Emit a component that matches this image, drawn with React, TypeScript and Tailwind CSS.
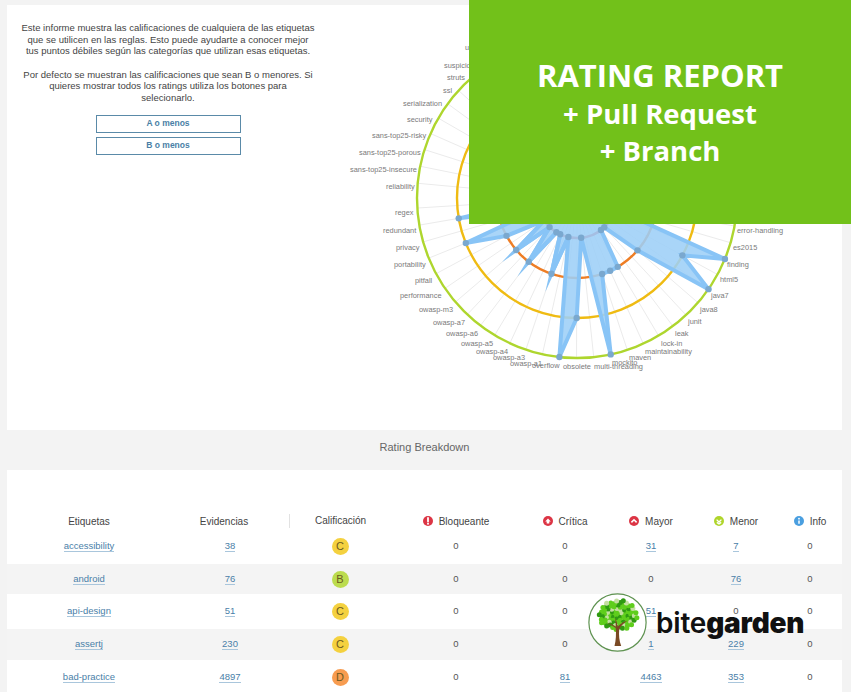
const CX = 577;
const CY = 198;

// radar: spoke k runs from the left horizontal, going down and round
const polar = (k: number, r: number) => {
  const a = ((3.6 + 6.16 * k) * Math.PI) / 180;
  return [CX - r * Math.cos(a), CY + r * Math.sin(a)];
};

const values: Record<number, number> = {
  1: 120, 3: 120, 4: 80, 6: 80, 8: 80, 11: 80, 13: 160, 14: 120, 16: 160,
  17: 80, 18: 80, 19: 80, 22: 80, 23: 160, 24: 120, 25: 160,
};
const points = Array.from({ length: 58 }, (_, k) => polar(k, values[k] ?? 40));

// the thin D-rated spikes keep their long pointed joins
const spikes = [6, 8, 11];

const labels: [string, number, number][] = [
  ['unused', 465, 47],
  ['suspicious', 444, 65],
  ['struts', 447, 77],
  ['ssl', 443, 90],
  ['serialization', 403, 103],
  ['security', 407, 119],
  ['sans-top25-risky', 372, 135],
  ['sans-top25-porous', 359, 152],
  ['sans-top25-insecure', 350, 169],
  ['reliability', 386, 186],
  ['regex', 395, 212],
  ['redundant', 383, 230],
  ['privacy', 396, 247],
  ['portability', 394, 264],
  ['pitfall', 415, 280],
  ['performance', 400, 295],
  ['owasp-m3', 419, 309],
  ['owasp-a7', 433, 322],
  ['owasp-a6', 446, 333],
  ['owasp-a5', 461, 343],
  ['owasp-a4', 476, 351],
  ['owasp-a3', 493, 357],
  ['owasp-a1', 510, 363],
  ['overflow', 532, 365],
  ['obsolete', 563, 366],
  ['multi-threading', 594, 366],
  ['mockito', 612, 362],
  ['maven', 629, 357],
  ['maintainability', 645, 351],
  ['lock-in', 661, 343],
  ['leak', 675, 333],
  ['junit', 688, 321],
  ['java8', 700, 309],
  ['java7', 711, 295],
  ['html5', 720, 279],
  ['finding', 727, 264],
  ['es2015', 733, 247],
  ['error-handling', 737, 230],
];

function RadarChart() {
  return (
    <svg width="513" height="425" viewBox="329 5 513 425" className="shrink-0">
      {points.map((_, k) => {
        const [x, y] = polar(k, 160);
        return <line key={k} x1={CX} y1={CY} x2={x} y2={y} stroke="#ebebeb" strokeWidth="1" />;
      })}
      <circle cx={CX} cy={CY} r="160" fill="none" stroke="#aed62e" strokeWidth="2.4" />
      <circle cx={CX} cy={CY} r="120" fill="none" stroke="#efbb12" strokeWidth="2.4" />
      <circle cx={CX} cy={CY} r="80" fill="none" stroke="#ee7d24" strokeWidth="2.4" />
      <circle cx={CX} cy={CY} r="40" fill="none" stroke="#d9404c" strokeWidth="2.4" />
      <polygon
        points={points.map((p) => p.join(',')).join(' ')}
        fill="#9dcff7"
        fillOpacity="0.88"
        stroke="#88c4f6"
        strokeWidth="4"
        strokeLinejoin="miter"
        strokeMiterlimit="4"
      />
      {spikes.map((k) => (
        <polyline
          key={k}
          points={[points[k - 1], points[k], points[k + 1]].map((p) => p.join(',')).join(' ')}
          fill="none"
          stroke="#88c4f6"
          strokeWidth="4"
          strokeLinejoin="miter"
          strokeMiterlimit="12"
        />
      ))}
      {points.map(([x, y], k) => (
        <circle key={k} cx={x} cy={y} r="3.2" fill="#7aa8cf" />
      ))}
      {labels.map(([text, x, y]) => (
        <text
          key={text}
          x={x}
          y={y + 3}
          fontSize="7.4"
          fill="#7a7a7a"
          fontFamily="'Liberation Sans', sans-serif"
        >
          {text}
        </text>
      ))}
    </svg>
  );
}

function Dot({ color, children }: { color: string; children: React.ReactNode }) {
  return (
    <svg width="10" height="10" viewBox="0 0 10 10" className="shrink-0">
      <circle cx="5" cy="5" r="5" fill={color} />
      {children}
    </svg>
  );
}

const columns = [
  { name: 'Bloqueante', icon: (
    <Dot color="#dc3545">
      <path d="M5 2v3.6" stroke="#fff" strokeWidth="1.8" strokeLinecap="round" />
      <circle cx="5" cy="7.8" r="1" fill="#fff" />
    </Dot>
  ) },
  { name: 'Crítica', icon: (
    <Dot color="#dc3545">
      <path d="M2.2 5.4 5 2.4l2.8 3H6.3v2.2H3.7V5.4z" fill="#fff" />
    </Dot>
  ) },
  { name: 'Mayor', icon: (
    <Dot color="#dc3545">
      <path d="M2.4 6.4 5 3.8l2.6 2.6" fill="none" stroke="#fff" strokeWidth="1.6" />
    </Dot>
  ) },
  { name: 'Menor', icon: (
    <Dot color="#afd52b">
      <path d="M2.6 3.6 5 6l2.4-2.4M2.8 6.4 5 8l2.2-1.6" fill="none" stroke="#fff" strokeWidth="1.3" />
    </Dot>
  ) },
  { name: 'Info', icon: (
    <Dot color="#4a9fe0">
      <path d="M5 4.4v3.4" stroke="#fff" strokeWidth="1.5" />
      <circle cx="5" cy="2.7" r=".9" fill="#fff" />
    </Dot>
  ) },
];

const rows = [
  { tag: 'accessibility', count: 38, grade: 'C', values: [0, 0, 31, 7, 0], row: 'h-[35px] bg-white' },
  { tag: 'android', count: 76, grade: 'B', values: [0, 0, 0, 76, 0], row: 'h-[30px] bg-[#f4f4f4]' },
  { tag: 'api-design', count: 51, grade: 'C', values: [0, 0, 51, 0, 0], row: 'h-[35px] bg-white' },
  { tag: 'assertj', count: 230, grade: 'C', values: [0, 0, 1, 229, 0], row: 'h-[31px] bg-[#f4f4f4]' },
  { tag: 'bad-practice', count: 4897, grade: 'D', values: [0, 81, 4463, 353, 0], row: 'h-[34px] bg-white' },
];

const gradeColors: Record<string, string> = {
  B: 'bg-[#bcdc4e]',
  C: 'bg-[#f4d13f]',
  D: 'bg-[#f79c50]',
};

const gridCols = 'grid grid-cols-[164px_118px_102px_130px_88px_84px_86px_62px] items-center';

function NumberLink({ value }: { value: number }) {
  return <a className="border-b border-[#a9c6dc] leading-[13px] text-[#4a80a8]">{value}</a>;
}

function Logo() {
  const blobs = Array.from({ length: 80 }, (_, i) => {
    const a = i * 2.4;
    const d = 2.1 * Math.sqrt(i);
    return { x: 30 + d * 1.05 * Math.cos(a), y: 22 + d * 0.8 * Math.sin(a), i };
  });
  return (
    <div className="absolute left-[588px] top-[593px] flex items-center">
      <svg width="59" height="59" viewBox="0 0 59 59" className="shrink-0">
        <circle cx="29.5" cy="29.5" r="28.6" fill="#fff" stroke="#5e9250" strokeWidth="1.2" />
        {blobs.map((b) => (
          <circle
            key={b.i}
            cx={b.x}
            cy={b.y}
            r="2.5"
            fill={b.i % 5 === 0 ? '#c4dfa0' : b.i % 3 === 0 ? '#2f9a12' : '#5fce1c'}
          />
        ))}
        <path
          d="M26.5 53c1.5-6 1.8-12 1.2-18-3-2-6-4-9.5-5 3.5.4 6.5 1.6 9.5 3.4 0-3 0-6-1-9 2 3 2.500 6 3 9 3-3 6-5 10-6-3 2-7 5-8.500 9-.5 6 0 11 2 16.600z"
          fill="#7a4a24"
        />
      </svg>
      <div className="ml-[9px] font-['Inter',sans-serif] text-[28px] leading-none tracking-[-0.2px] text-[#111]">
        <span className="font-semibold">bite</span>
        <span className="font-black">garden</span>
      </div>
    </div>
  );
}

export default function App() {
  return (
    <div className="relative h-[692px] w-[851px] overflow-hidden bg-[#f3f3f3] pl-[7px] pr-[9px] pt-[5px] font-['Liberation_Sans',sans-serif]">
      <div className="flex h-[425px] bg-white">
        <div className="flex w-[322px] shrink-0 flex-col items-center px-[14px] pt-[17px]">
          <p className="text-center text-[9.5px] leading-[11.6px] text-[#444]">
            Este informe muestra las calificaciones de cualquiera de las etiquetas que se utilicen en las reglas. Esto
            puede ayudarte a conocer mejor tus puntos débiles según las categorías que utilizan esas etiquetas.
          </p>
          <p className="mt-[12px] w-[290px] text-center text-[9.5px] leading-[11.6px] text-[#444]">
            Por defecto se muestran las calificaciones que sean B o menores. Si quieres mostrar todos los ratings
            utiliza los botones para selecionarlo.
          </p>
          <button className="mt-[11px] h-[18px] w-[145px] border border-[#5a8aa8] text-[8.5px] font-bold text-[#4a7fa6]">
            A o menos
          </button>
          <button className="mt-[4px] h-[18px] w-[145px] border border-[#5a8aa8] text-[8.5px] font-bold text-[#4a7fa6]">
            B o menos
          </button>
        </div>
        <RadarChart />
      </div>

      <div className="flex h-[40px] items-center justify-center pb-[6px] text-[11px] text-[#666]">Rating Breakdown</div>

      <div className="bg-white pt-[43px]">
        <div className={`${gridCols} h-[16px] text-[10px] text-[#444]`}>
          <span className="text-center">Etiquetas</span>
          <span className="pr-[12px] text-center">Evidencias</span>
          <span className="border-l border-[#e2e2e2] text-center leading-[14px]">Calificación</span>
          {columns.map((c) => (
            <span key={c.name} className="flex items-center justify-center gap-[6px]">
              {c.icon}
              {c.name}
            </span>
          ))}
        </div>
        <div>
          {rows.map((r) => (
            <div key={r.tag} className={`${gridCols} ${r.row} text-[9.5px] text-[#555]`}>
              <span className="text-center">
                <a className="border-b border-[#a9c6dc] text-[#4a80a8]">{r.tag}</a>
              </span>
              <span className="text-center">
                <NumberLink value={r.count} />
              </span>
              <span className="flex justify-center">
                <span
                  className={`flex h-[17px] w-[17px] items-center justify-center rounded-full text-[11px] text-[#6b5a20] ${gradeColors[r.grade]}`}
                >
                  {r.grade}
                </span>
              </span>
              {r.values.map((v, i) => (
                <span key={i} className="text-center">
                  {v === 0 ? v : <NumberLink value={v} />}
                </span>
              ))}
            </div>
          ))}
        </div>
      </div>

      <div className="absolute left-[469px] top-0 flex h-[224px] w-[382px] flex-col items-center bg-[#72c11a] pt-[54px] font-['Open_Sans',sans-serif] font-bold text-white">
        <div className="text-[31px] leading-[42px]">RATING REPORT</div>
        <div className="text-[27.5px] leading-[36px]">+ Pull Request</div>
        <div className="text-[27.5px] leading-[37px]">+ Branch</div>
      </div>

      <Logo />
    </div>
  );
}
